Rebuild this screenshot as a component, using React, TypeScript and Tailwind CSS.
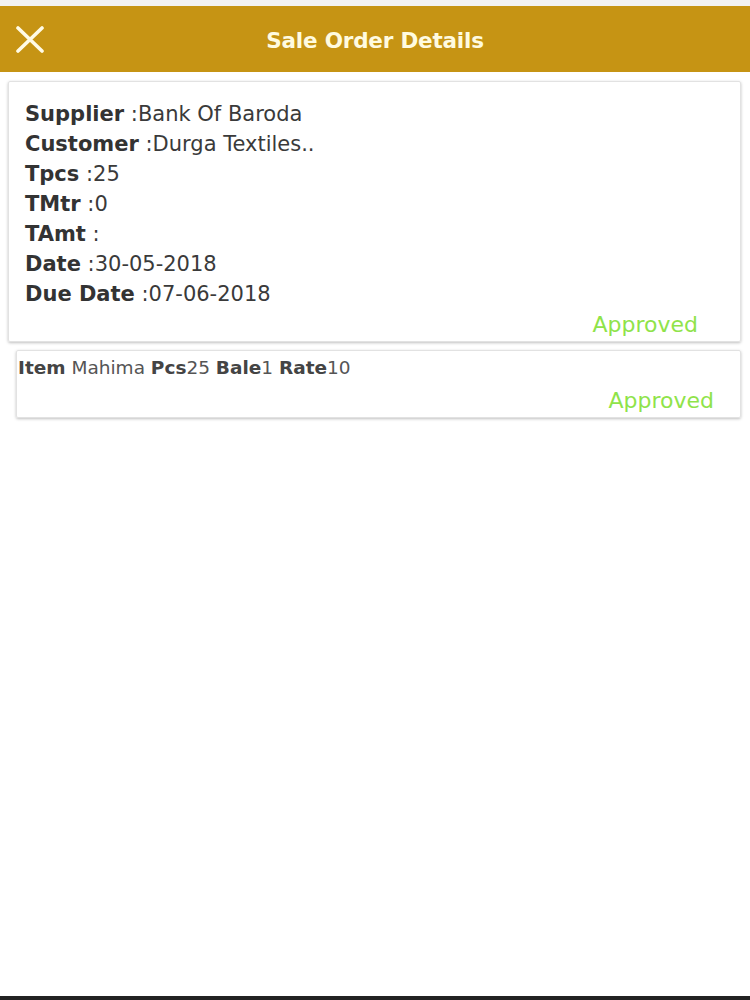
import React from "react";

const Row = ({ label, value }: { label: string; value: string }) => (
  <div className="leading-[30px]">
    <span className="font-bold text-[#333]">{label}</span>
    <span> :{value}</span>
  </div>
);

export default function App() {
  return (
    <div className="w-[750px] h-[1000px] flex flex-col bg-white text-[#3a3a3a]" style={{ fontFamily: '"DejaVu Sans", "Open Sans", sans-serif' }}>
      <div className="h-[6px] bg-[#f2f2f2]" />
      <div className="h-[66px] bg-[#c69414] flex items-center relative">
        <svg className="absolute left-[15px] top-[20px]" width="30" height="27" viewBox="0 0 30 27">
          <path d="M3 2 L27 25 M27 2 L3 25" stroke="#fffbe6" strokeWidth="3.6" strokeLinecap="round" />
        </svg>
        <div className="flex-1 text-center text-[21.5px] font-bold text-[#fffbe0] tracking-[-0.2px] pt-[4px]">Sale Order Details</div>
      </div>
      <div className="flex-1 flex flex-col pr-[9px] pt-[9px]">
        <div className="ml-[8px] border border-[#e2e2e2] rounded-[2px] shadow-[0_1px_3px_rgba(0,0,0,0.25)] pl-[16px] pr-[42px] pt-[17px] pb-[1px] text-[21px]">
          <Row label="Supplier" value="Bank Of Baroda" />
          <Row label="Customer" value="Durga Textiles.." />
          <Row label="Tpcs" value="25" />
          <Row label="TMtr" value="0" />
          <Row label="TAmt" value="" />
          <Row label="Date" value="30-05-2018" />
          <Row label="Due Date" value="07-06-2018" />
          <div className="text-right text-[22px] text-[#8fe34a] leading-[30px] pt-[1px]">Approved</div>
        </div>
        <div className="ml-[16px] mt-[8px] border border-[#e2e2e2] rounded-[2px] shadow-[0_1px_3px_rgba(0,0,0,0.25)] pl-[1px] pr-[26px] pt-[5px]">
          <div className="text-[18.5px] text-[#555] leading-[24px]">
            <span className="font-bold text-[#444]">Item</span> Mahima <span className="font-bold text-[#444]">Pcs</span>25 <span className="font-bold text-[#444]">Bale</span>1 <span className="font-bold text-[#444]">Rate</span>10
          </div>
          <div className="mt-[5px] text-right text-[22px] text-[#8fe34a] leading-[32px]">Approved</div>
        </div>
      </div>
      <div className="h-[4px] bg-[#222]" />
    </div>
  );
}
